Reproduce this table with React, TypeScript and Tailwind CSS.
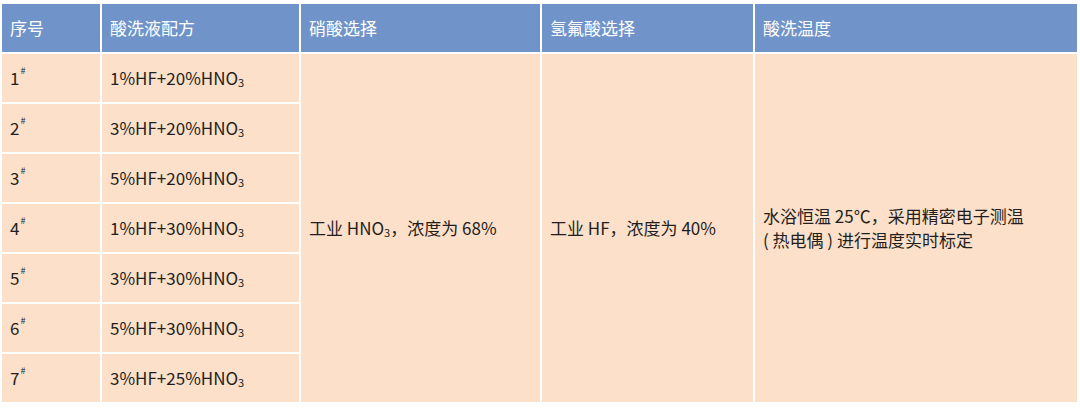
import React from "react";

const recipes = [
  ["1", "1%HF+20%HNO"],
  ["2", "3%HF+20%HNO"],
  ["3", "5%HF+20%HNO"],
  ["4", "1%HF+30%HNO"],
  ["5", "3%HF+30%HNO"],
  ["6", "5%HF+30%HNO"],
  ["7", "3%HF+25%HNO"],
];

const headers = ["序号", "酸洗液配方", "硝酸选择", "氢氟酸选择", "酸洗温度"];

const cell = "bg-[#fde0ca] flex items-center px-2 text-[17px] text-[#231f20]";

export default function App() {
  return (
    <div
      className="w-[1080px] h-[408px] bg-white pt-[4px] pl-[2px]"
      style={{ fontFamily: '"Noto Sans CJK SC", "Noto Sans", sans-serif' }}
    >
      <div className="grid w-[1075px] grid-cols-[98px_197px_239px_211px_322px] grid-rows-[48px_repeat(7,48px)] gap-[2px]">
        {headers.map((h) => (
          <div
            key={h}
            className="bg-[#7094c9] flex items-center px-2 text-[17px] text-white"
          >
            {h}
          </div>
        ))}

        {recipes.map(([n, r], i) => (
          <React.Fragment key={n}>
            <div className={cell} style={{ gridRow: i + 2, gridColumn: 1 }}>
              {n}
              <sup className="text-[9px] -top-[7px] ml-[1px]">#</sup>
            </div>
            <div className={cell} style={{ gridRow: i + 2, gridColumn: 2 }}>
              {r}
              <sub className="text-[11px] top-[4px]">3</sub>
            </div>
          </React.Fragment>
        ))}

        <div className={`${cell} row-start-2 row-end-9 col-start-3`}>
          工业 HNO<sub className="text-[11px] top-[4px]">3</sub>，浓度为 68%
        </div>
        <div className={`${cell} row-start-2 row-end-9 col-start-4`}>
          工业 HF，浓度为 40%
        </div>
        <div className={`${cell} row-start-2 row-end-9 col-start-5 leading-[24px]`}>
          <span>
            水浴恒温 25℃，采用精密电子测温
            <br />( 热电偶 ) 进行温度实时标定
          </span>
        </div>
      </div>
    </div>
  );
}
